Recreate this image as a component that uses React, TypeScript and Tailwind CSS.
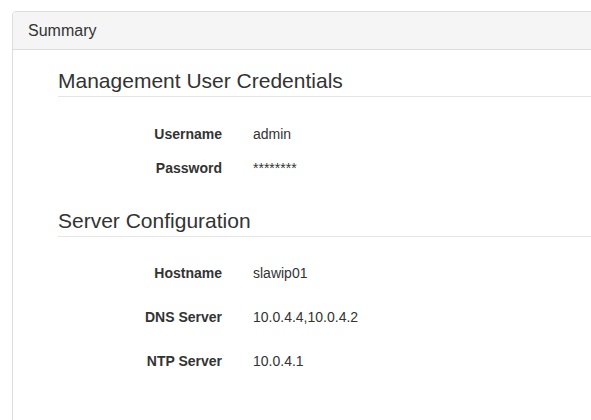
import React from "react";

type Field = { label: string; value: string };

const credentials: Field[] = [
  { label: "Username", value: "admin" },
  { label: "Password", value: "********" },
];

const server: Field[] = [
  { label: "Hostname", value: "slawip01" },
  { label: "DNS Server", value: "10.0.4.4,10.0.4.2" },
  { label: "NTP Server", value: "10.0.4.1" },
];

function Legend({ children }: { children: React.ReactNode }) {
  return (
    <div className="h-[31px] border-b border-[#e5e5e5] text-[21px] leading-[30px] text-[#333]">
      {children}
    </div>
  );
}

function Row({ field }: { field: Field }) {
  return (
    <div className="flex h-[20px] text-[14px] leading-[20px] text-[#333]">
      <div className="w-[164px] text-right font-bold">{field.label}</div>
      <div className="ml-[31px]">{field.value}</div>
    </div>
  );
}

export default function App() {
  return (
    <div
      className="h-[420px] w-[591px] overflow-hidden bg-white"
      style={{ fontFamily: '"Liberation Sans", Arial, sans-serif' }}
    >
      <div className="ml-[12px] mt-[11px] h-[420px] w-[600px] rounded-tl-[4px] border border-[#ddd] bg-white">
        <div className="flex h-[38px] items-center rounded-tl-[3px] border-b border-[#ddd] bg-[#f5f5f5] px-[15px] text-[16px] text-[#333]">
          Summary
        </div>
        <div className="pl-[45px] pt-[16px]">
          <Legend>Management User Credentials</Legend>
          <div className="mt-[27px] flex flex-col gap-[14px]">
            {credentials.map((f) => (
              <Row key={f.label} field={f} />
            ))}
          </div>
          <div className="mt-[28px]">
            <Legend>Server Configuration</Legend>
          </div>
          <div className="mt-[26px] flex flex-col gap-[24px]">
            {server.map((f) => (
              <Row key={f.label} field={f} />
            ))}
          </div>
        </div>
      </div>
    </div>
  );
}
